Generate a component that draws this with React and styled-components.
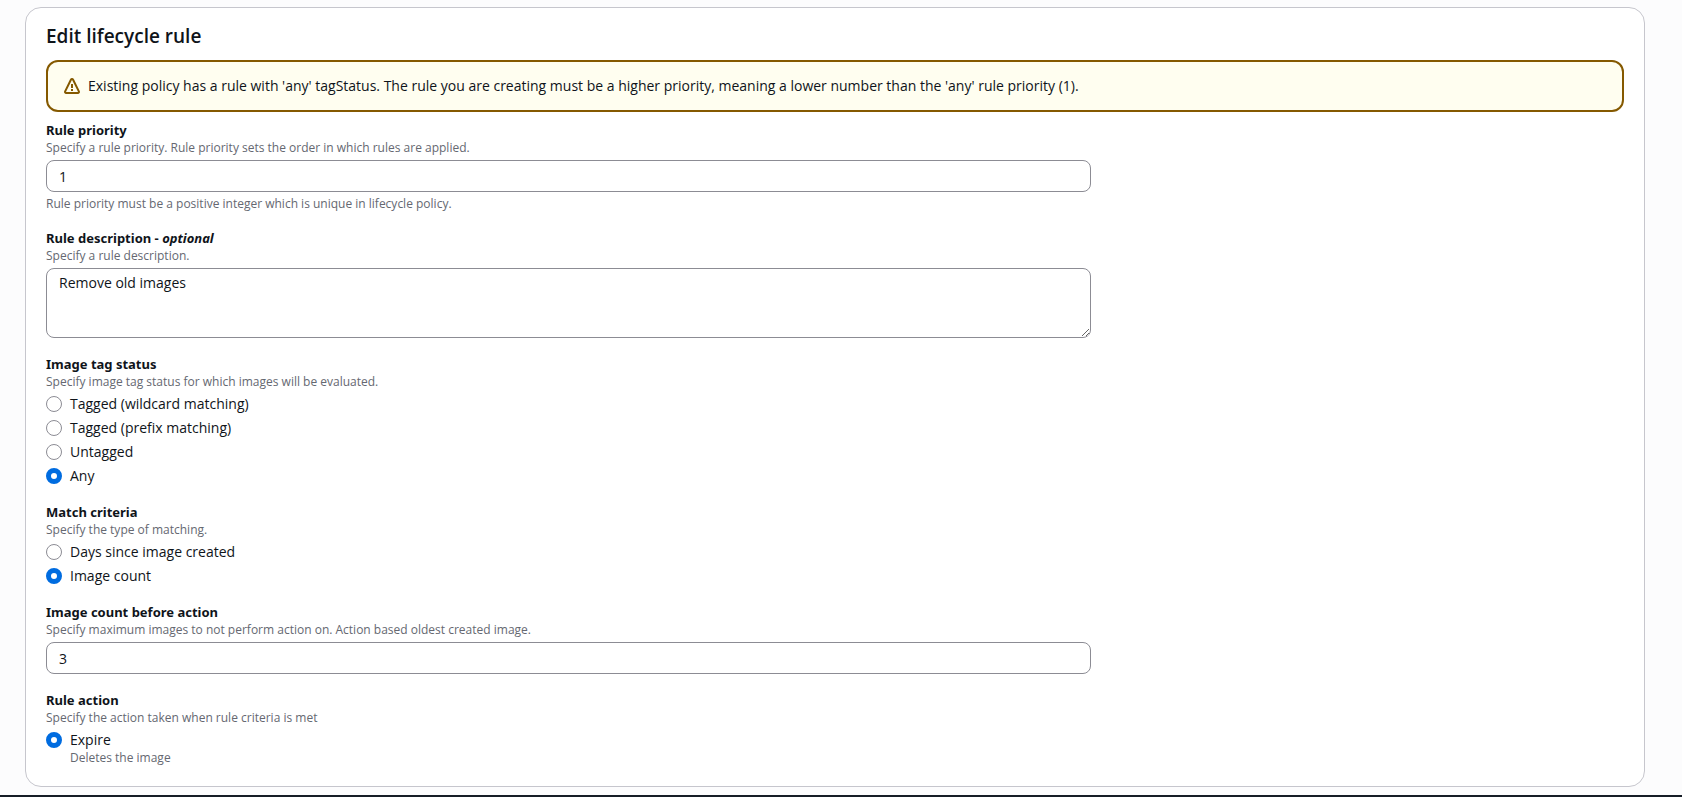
import React, { useState } from "react";
import styled, { createGlobalStyle } from "styled-components";

const TAG_OPTIONS = [
    { value: "wildcard", label: "Tagged (wildcard matching)" },
    { value: "prefix", label: "Tagged (prefix matching)" },
    { value: "untagged", label: "Untagged" },
    { value: "any", label: "Any" },
];

const MATCH_OPTIONS = [
    { value: "days", label: "Days since image created" },
    { value: "count", label: "Image count" },
];

const ACTION_OPTIONS = [
    { value: "expire", label: "Expire", description: "Deletes the image" },
];

function RadioGroup({ name, title, hint, options, value, onChange }) {
    return (
        <Fieldset aria-describedby={`${name}-hint`}>
            <Legend>{title}</Legend>
            <Hint id={`${name}-hint`}>{hint}</Hint>
            <Options>
                {options.map((option) => (
                    <Option key={option.value}>
                        <Radio
                            type="radio"
                            name={name}
                            value={option.value}
                            checked={value === option.value}
                            onChange={() => onChange(option.value)}
                        />
                        <span>
                            {option.label}
                            {option.description && <Hint>{option.description}</Hint>}
                        </span>
                    </Option>
                ))}
            </Options>
        </Fieldset>
    );
}

export default function App() {
    const [priority, setPriority] = useState("1");
    const [description, setDescription] = useState("Remove old images");
    const [tagStatus, setTagStatus] = useState("any");
    const [criteria, setCriteria] = useState("count");
    const [count, setCount] = useState("3");
    const [action, setAction] = useState("expire");

    return (
        <Page>
            <GlobalStyle />
            <Card>
                <Title>Edit lifecycle rule</Title>
                <Alert role="alert">
                    <WarningIcon viewBox="0 0 16 16" aria-hidden="true">
                        <path d="M6.9 1.7 1.15 13.4a1.1 1.1 0 0 0 1 1.6h11.7a1.1 1.1 0 0 0 1-1.6L9.1 1.7a1.25 1.25 0 0 0-2.2 0Z" />
                        <path d="M8 6v4M8 11v2" />
                    </WarningIcon>
                    <span>
                        Existing policy has a rule with 'any' tagStatus. The rule you are creating must be a higher
                        priority, meaning a lower number than the 'any' rule priority (1).
                    </span>
                </Alert>
                <FormGrid>
                    <Fields>
                        <div>
                            <Label htmlFor="priority">Rule priority</Label>
                            <Hint>Specify a rule priority. Rule priority sets the order in which rules are applied.</Hint>
                            <Input
                                id="priority"
                                inputMode="numeric"
                                value={priority}
                                onChange={(e) => setPriority(e.target.value)}
                            />
                            <Constraint>Rule priority must be a positive integer which is unique in lifecycle policy.</Constraint>
                        </div>
                        <div>
                            <Label htmlFor="description">
                                Rule description - <em>optional</em>
                            </Label>
                            <Hint>Specify a rule description.</Hint>
                            <TextArea
                                id="description"
                                value={description}
                                onChange={(e) => setDescription(e.target.value)}
                            />
                        </div>
                        <RadioGroup
                            name="tag-status"
                            title="Image tag status"
                            hint="Specify image tag status for which images will be evaluated."
                            options={TAG_OPTIONS}
                            value={tagStatus}
                            onChange={setTagStatus}
                        />
                        <RadioGroup
                            name="criteria"
                            title="Match criteria"
                            hint="Specify the type of matching."
                            options={MATCH_OPTIONS}
                            value={criteria}
                            onChange={setCriteria}
                        />
                        <div>
                            <Label htmlFor="count">Image count before action</Label>
                            <Hint>Specify maximum images to not perform action on. Action based oldest created image.</Hint>
                            <Input
                                id="count"
                                inputMode="numeric"
                                value={count}
                                onChange={(e) => setCount(e.target.value)}
                            />
                        </div>
                        <RadioGroup
                            name="action"
                            title="Rule action"
                            hint="Specify the action taken when rule criteria is met"
                            options={ACTION_OPTIONS}
                            value={action}
                            onChange={setAction}
                        />
                    </Fields>
                </FormGrid>
            </Card>
            <Footer />
        </Page>
    );
}

const GlobalStyle = createGlobalStyle`
    *, *::before, *::after {
        box-sizing: border-box;
    }

    body {
        margin: 0;
        background: #fcfcfd;
        color: #0f141a;
        font-family: "Open Sans", "Noto Sans", sans-serif;
        font-size: 14px;
        line-height: 20px;
    }
`;

const Page = styled.div`
    display: flex;
    flex-direction: column;
    min-height: 100vh;
`;

const Card = styled.main`
    margin: 7px 37px 8px 25px;
    padding: 16px 20px 20px;
    background: #fff;
    border: 1px solid #c6c6cd;
    border-radius: 16px;
`;

const Title = styled.h2`
    margin: 0 0 12px;
    font-size: 19px;
    line-height: 24px;
    font-weight: 600;
`;

const Alert = styled.div`
    display: flex;
    align-items: center;
    gap: 8px;
    margin-bottom: 8px;
    padding: 14px 16px;
    background: #fffef0;
    border: 2px solid #855900;
    border-radius: 12px;
`;

const WarningIcon = styled.svg`
    flex: none;
    width: 16px;
    height: 16px;
    fill: none;
    stroke: #855900;
    stroke-width: 2;
    stroke-linejoin: round;
`;

const FormGrid = styled.div`
    display: grid;
    grid-template-columns: repeat(3, 1fr);
    column-gap: 20px;
`;

const Fields = styled.form`
    grid-column: span 2;
    display: flex;
    flex-direction: column;
    gap: 16px;

    @media (max-width: 768px) {
        grid-column: span 3;
    }
`;

const Label = styled.label`
    display: block;
    font-family: "Noto Sans", "Open Sans", sans-serif;
    font-size: 13px;
    font-weight: 700;
`;

const Hint = styled.span`
    display: block;
    color: #656871;
    font-size: 12px;
    line-height: 16px;
`;

const Constraint = styled(Hint)`
    margin-top: 4px;
`;

const Input = styled.input`
    display: block;
    width: 100%;
    height: 32px;
    margin-top: 4px;
    padding: 4px 12px;
    background: #fff;
    border: 1px solid #8c8c94;
    border-radius: 8px;
    color: inherit;
    font: inherit;
`;

const TextArea = styled.textarea`
    display: block;
    width: 100%;
    height: 70px;
    margin-top: 4px;
    padding: 4px 12px;
    background: #fff;
    border: 1px solid #8c8c94;
    border-radius: 8px;
    color: inherit;
    font: inherit;
    resize: vertical;
`;

const Fieldset = styled.fieldset`
    min-width: 0;
    margin: 0;
    padding: 0;
    border: 0;
`;

const Legend = styled.legend`
    padding: 0;
    font-family: "Noto Sans", "Open Sans", sans-serif;
    font-size: 13px;
    font-weight: 700;
`;

const Options = styled.div`
    display: flex;
    flex-direction: column;
    align-items: flex-start;
    gap: 4px;
    margin-top: 4px;
`;

const Option = styled.label`
    display: flex;
    gap: 8px;
`;

const Radio = styled.input`
    appearance: none;
    flex: none;
    width: 16px;
    height: 16px;
    margin: 2px 0;
    background: #fff;
    border: 1px solid #8c8c94;
    border-radius: 50%;

    &:checked {
        border: 5px solid #006ce0;
    }
`;

const Footer = styled.footer`
    flex: 1;
    min-height: 2px;
    background: #161d26;
`;
